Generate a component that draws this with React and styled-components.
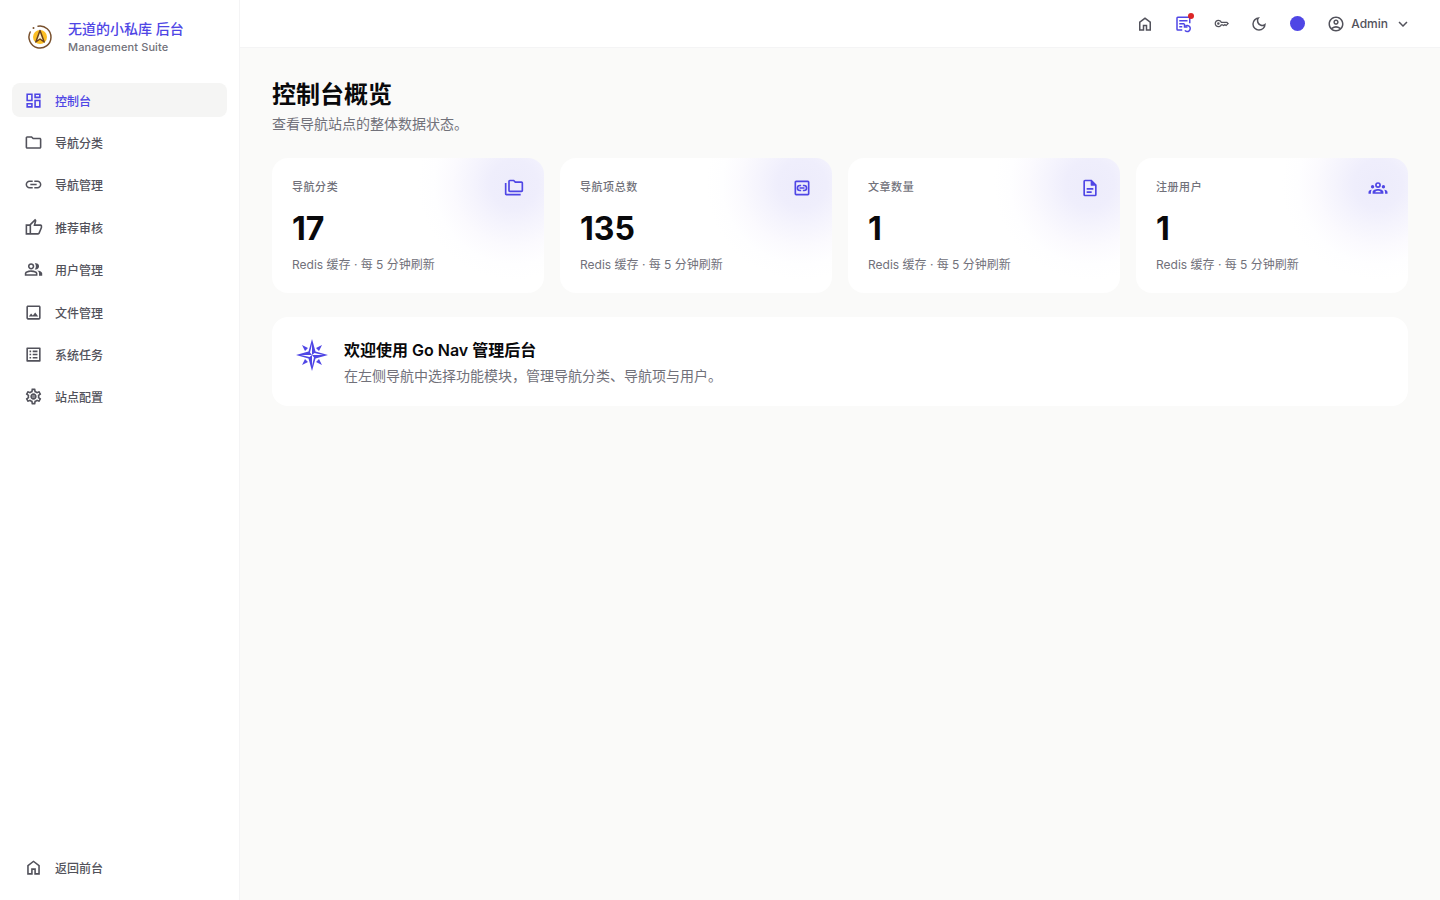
import styled, { createGlobalStyle } from 'styled-components'
import {
    MdOutlineDashboard, MdOutlineFolder, MdLink, MdOutlineImage, MdOutlineListAlt,
    MdOutlineSettings, MdOutlineFolderCopy, MdOutlineDarkMode, MdOutlineAccountCircle, MdExpandMore
} from 'react-icons/md'

const GlobalStyle = createGlobalStyle`
    * { box-sizing: border-box; }
    body {
        margin: 0;
        background: #fafaf9;
        color: #09090b;
        font-family: Inter, "Noto Sans CJK SC", sans-serif;
        -webkit-font-smoothing: antialiased;
    }
    svg { display: block; flex-shrink: 0; }
    button { font-family: inherit; }
    h1, h2, p { margin: 0; }
`

const Layout = styled.div`
    display: flex;
    min-height: 100vh;
`

const Sidebar = styled.aside`
    display: flex;
    flex-direction: column;
    width: 240px;
    flex-shrink: 0;
    padding: 16px 12px;
    background: #fff;
    border-right: 1px solid #f4f4f5;
`

const Brand = styled.div`
    display: flex;
    align-items: center;
    gap: 12px;
    padding: 0 12px;
    margin-bottom: 25px;
    height: 42px;
`

const BrandName = styled.div`
    font-size: 14px;
    line-height: 20px;
    font-weight: 500;
    color: #4f46e5;
`

const BrandSub = styled.div`
    font-size: 11px;
    line-height: 16px;
    font-weight: 500;
    letter-spacing: 0.01em;
    color: #71717a;
`

const Nav = styled.nav`
    display: flex;
    flex-direction: column;
    justify-content: space-between;
    height: 331px;
    margin-bottom: auto;
`

const NavLink = styled.a`
    display: flex;
    align-items: center;
    gap: 12px;
    height: 34px;
    padding: 0 12px;
    border-radius: 8px;
    font-size: 12px;
    font-weight: 500;
    text-decoration: none;
    color: ${({active})=>(active ? '#4f46e5' : '#52525b')};
    background: ${({active})=>(active ? '#f5f5f4' : 'transparent')};
    svg { font-size: 19px; }
`

const Main = styled.div`
    flex: 1;
    min-width: 0;
`

const Topbar = styled.header`
    display: flex;
    align-items: center;
    justify-content: flex-end;
    gap: 6px;
    height: 48px;
    padding: 0 24px;
    background: #fff;
    border-bottom: 1px solid #f4f4f5;
`

const IconButton = styled.button`
    position: relative;
    display: flex;
    align-items: center;
    justify-content: center;
    width: 32px;
    height: 32px;
    padding: 0;
    border: 0;
    border-radius: 8px;
    background: none;
    font-size: 18px;
    color: ${({accent})=>(accent ? '#4f46e5' : '#52525b')};
`

const RedDot = styled.span`
    position: absolute;
    top: 5px;
    right: 5px;
    width: 6px;
    height: 6px;
    border-radius: 50%;
    background: #dc2626;
`

const ColorDot = styled.span`
    width: 15px;
    height: 15px;
    border-radius: 50%;
    background: #4f46e5;
`

const UserButton = styled.button`
    display: flex;
    align-items: center;
    gap: 6px;
    height: 32px;
    padding: 0 4px 0 8px;
    border: 0;
    background: none;
    font-size: 12px;
    font-weight: 500;
    color: #52525b;
`

const Content = styled.main`
    padding: 32px;
`

const Title = styled.h1`
    font-size: 24px;
    line-height: 30px;
    font-weight: 600;
`

const Subtitle = styled.p`
    margin: 2px 0 22px;
    font-size: 14px;
    line-height: 24px;
    color: #71717a;
`

const Cards = styled.section`
    display: grid;
    grid-template-columns: repeat(4, 1fr);
    gap: 16px;
    margin-bottom: 24px;
`

const Card = styled.article`
    padding: 20px;
    border-radius: 16px;
    background: radial-gradient(circle at calc(100% - 30px) 26px, #edecfb 0, #efeefc 24px, #f5f4fd 42px, #fbfafe 62px, #fefeff 80px, #fff 96px);
`

const CardHead = styled.div`
    display: flex;
    align-items: center;
    justify-content: space-between;
    height: 19px;
    font-size: 11px;
    line-height: 17px;
    font-weight: 500;
    letter-spacing: 0.05em;
    color: #71717a;
    svg { font-size: 20px; color: #4f46e5; }
`

const Number = styled.div`
    margin: 12px 0 8px;
    font-size: 32px;
    line-height: 40px;
    font-weight: 700;
`

const Hint = styled.p`
    font-size: 12px;
    line-height: 16px;
    color: #71717a;
`

const Welcome = styled.section`
    display: flex;
    gap: 16px;
    padding: 20px 24px;
    border-radius: 16px;
    background: #fff;
    color: #4f46e5;
    > svg { margin-top: 2px; }
`

const WelcomeTitle = styled.h2`
    margin-bottom: 2px;
    font-size: 16px;
    line-height: 26px;
    font-weight: 600;
    color: #09090b;
`

const WelcomeText = styled.p`
    font-size: 14px;
    line-height: 21px;
    color: #71717a;
`

const Icon = ({size = '1em', children}) => (
    <svg width={size} height={size} viewBox="0 0 24 24" fill="currentColor" aria-hidden="true">{children}</svg>
)

const HomeIcon = () => (
    <Icon><path d="M6 19h3v-6h6v6h3v-9l-6-4.5L6 10v9Zm-2 2V9l8-6 8 6v12h-7v-6h-2v6H4Z" /></Icon>
)

const ThumbIcon = () => (
    <Icon><path d="M18 21H7V8l7-7l1.25 1.25q.175.175.288.475t.112.575v.35L14.55 8H21q.8 0 1.4.6T23 10v2q0 .175-.05.375t-.1.375l-3 7.05q-.225.5-.75.85T18 21m-9-2h9l3-7v-2h-9l1.35-5.5L9 8.85zM7 8v2H4v9h3v2H2V8z" /></Icon>
)

const GroupIcon = () => (
    <Icon><path d="M1 20v-2.800q0-.85.438-1.562T2.600 14.550q1.550-.775 3.150-1.162T9 13t3.250.388t3.150 1.162q.725.375 1.163 1.088T17 17.200V20zm18 0v-3q0-1.100-.612-2.113T16.650 13.150q1.275.15 2.400.513t2.100.887q.9.5 1.375 1.112T23 17v3zM9 12q-1.650 0-2.825-1.175T5 8t1.175-2.825T9 4t2.825 1.175T13 8t-1.175 2.825T9 12m10-4q0 1.650-1.175 2.825T15 12q-.275 0-.7-.062t-.7-.138q.675-.8 1.038-1.775T15 8t-.362-2.025T13.600 4.200q.35-.125.7-.163T15 4q1.650 0 2.825 1.175T19 8M3 18h12v-.8q0-.275-.137-.5t-.363-.35q-1.350-.675-2.725-1.012T9 15t-2.775.338T3.500 16.350q-.225.125-.363.35T3 17.200zm6-8q.825 0 1.413-.587T11 8t-.587-1.412T9 6t-1.412.588T7 8t.588 1.413T9 10" /></Icon>
)

const SettingsIcon = () => (
    <Icon>
        <MdOutlineSettings size={24} />
        <circle cx="12" cy="12" r="2" fillOpacity="0.7" />
    </Icon>
)

const TaskIcon = () => (
    <svg width="18" height="18" viewBox="0 0 24 24" fill="none" stroke="currentColor" strokeWidth="2" aria-hidden="true">
        <path d="M11 20H5a1 1 0 0 1-1-1V4a1 1 0 0 1 1-1h15a1 1 0 0 1 1 1v7" />
        <path d="M7 7.500h11M7 11.500h7M7 15.500h4" />
        <path d="M14.500 20.500a4 4 0 1 0 .5-5.500" />
        <path d="M14 12v4h4" />
    </svg>
)

const KeyIcon = () => (
    <Icon size={15}><path d="M7 14q-.825 0-1.412-.587T5 12t.588-1.412T7 10t1.413.588T9 12t-.587 1.413T7 14m0 4q-2.500 0-4.250-1.750T1 12t1.750-4.250T7 6q1.675 0 3.038.825T12.200 9H21l3 3l-4.500 4.500l-2-1.500l-2 1.500l-2.125-1.500H12.200q-.8 1.350-2.162 2.175T7 18m0-2q1.400 0 2.463-.85T10.875 13H14l1.450 1.025L17.500 12.500l1.775 1.375L21.150 12l-1-1h-9.275q-.35-1.300-1.412-2.150T7 8q-1.650 0-2.825 1.175T3 12t1.175 2.825T7 16" /></Icon>
)

const LinkBoxIcon = () => (
    <Icon>
        <path d="M5 21a2 2 0 0 1-2-2V5c0-1.100.9-2 2-2h14a2 2 0 0 1 2 2v14a2 2 0 0 1-2 2H5Zm0-2h14V5H5v14Z" />
        <path d="M11 16H9.500a4 4 0 0 1 0-8H11v2H9.500a2 2 0 0 0 0 4H11v2Zm2 0v-2h1.500a2 2 0 0 0 0-4H13V8h1.500a4 4 0 0 1 0 8H13Zm-4-3v-2h6v2H9Z" />
    </Icon>
)

const ArticleIcon = () => (
    <Icon>
        <path d="M8 18v-2h6v2H8Zm0-4v-2h8v2H8Zm-2 8a2 2 0 0 1-2-2V4c0-1.100.9-2 2-2h8l6 6v12a2 2 0 0 1-2 2H6Zm7-13V4H6v16h12V9h-5Z" />
        <path d="M13 3l6 6h-6z" />
    </Icon>
)

const CrowdIcon = () => (
    <Icon>
        <path fillRule="evenodd" d="M12 5a3.500 3.500 0 1 1 0 7 3.500 3.500 0 0 1 0-7Zm0 2a1.500 1.500 0 1 0 0 3 1.500 1.500 0 0 0 0-3Z" />
        <circle cx="5.500" cy="10.500" r="2" />
        <circle cx="18.500" cy="10.500" r="2" />
        <path fillRule="evenodd" d="M5.500 19v-2c0-2.500 3.500-3.700 6.500-3.700s6.500 1.200 6.500 3.700v2h-13Zm3-2h7c-.8-1.100-2-1.600-3.500-1.600s-2.700.5-3.500 1.600Z" />
        <path d="M.6 19v-1.800c0-1.700 1.500-2.800 3.900-3-.7.9-1 1.800-1 2.800v2H.6Zm22.800 0v-1.800c0-1.700-1.500-2.800-3.900-3 .7.9 1 1.800 1 2.800v2h2.900Z" />
    </Icon>
)

const Logo = () => (
    <svg width="32" height="32" viewBox="0 0 32 32" fill="none" aria-hidden="true">
        <circle cx="16" cy="16" r="7" fill="#fcbf24" />
        <path d="M14 5.200A11 11 0 1 1 6.200 11" stroke="#78502d" strokeWidth="1.500" strokeLinecap="round" />
        <circle cx="9.500" cy="7" r="1" fill="#78502d" />
        <path d="M16 9.500 11.800 21l4.200-3 4.200 3Z" fill="#fff3cf" stroke="#6b431f" strokeWidth="1.500" strokeLinejoin="round" />
    </svg>
)

const CompassRose = () => (
    <svg width="32" height="32" viewBox="0 0 32 32" fill="currentColor" aria-hidden="true">
        <path d="m6 6 6 3-3 3Zm20 0-3 6-3-3ZM6 26l3-6 3 3Zm20 0-6-3 3-3Z" />
        <path fillRule="evenodd" d="m16 0 3.500 12.500L32 16l-12.500 3.500L16 32l-3.500-12.500L0 16l12.500-3.500ZM16 5v11l-2-2.500Zm11 11H16l2.500-2ZM16 27V16l2 2.500ZM5 16h11l-2.500 2Z" />
    </svg>
)

const links = [
    {text: '控制台', icon: MdOutlineDashboard, active: true},
    {text: '导航分类', icon: MdOutlineFolder},
    {text: '导航管理', icon: MdLink},
    {text: '推荐审核', icon: ThumbIcon},
    {text: '用户管理', icon: GroupIcon},
    {text: '文件管理', icon: MdOutlineImage},
    {text: '系统任务', icon: MdOutlineListAlt},
    {text: '站点配置', icon: SettingsIcon}
]

const stats = [
    {label: '导航分类', value: 17, icon: MdOutlineFolderCopy},
    {label: '导航项总数', value: 135, icon: LinkBoxIcon},
    {label: '文章数量', value: 1, icon: ArticleIcon},
    {label: '注册用户', value: 1, icon: CrowdIcon}
]

const App = () => {
    return(
        <Layout>
            <GlobalStyle />
            <Sidebar>
                <Brand>
                    <Logo />
                    <div>
                        <BrandName>无道的小私库 后台</BrandName>
                        <BrandSub>Management Suite</BrandSub>
                    </div>
                </Brand>
                <Nav>
                    {
                        links.map(({text, icon: LinkIcon, active}) => (
                            <NavLink key={text} href="#" active={active ? 1 : undefined}>
                                <LinkIcon />{text}
                            </NavLink>
                        ))
                    }
                </Nav>
                <NavLink href="#"><HomeIcon />返回前台</NavLink>
            </Sidebar>
            <Main>
                <Topbar>
                    <IconButton aria-label="首页"><HomeIcon /></IconButton>
                    <IconButton aria-label="任务" accent="true"><TaskIcon /><RedDot /></IconButton>
                    <IconButton aria-label="密码"><KeyIcon /></IconButton>
                    <IconButton aria-label="深色模式"><MdOutlineDarkMode /></IconButton>
                    <IconButton aria-label="主题色"><ColorDot /></IconButton>
                    <UserButton>
                        <MdOutlineAccountCircle size={18} />
                        Admin
                        <MdExpandMore size={18} />
                    </UserButton>
                </Topbar>
                <Content>
                    <Title>控制台概览</Title>
                    <Subtitle>查看导航站点的整体数据状态。</Subtitle>
                    <Cards>
                        {
                            stats.map(({label, value, icon: StatIcon}) => (
                                <Card key={label}>
                                    <CardHead>{label}<StatIcon /></CardHead>
                                    <Number>{value}</Number>
                                    <Hint>Redis 缓存 · 每 5 分钟刷新</Hint>
                                </Card>
                            ))
                        }
                    </Cards>
                    <Welcome>
                        <CompassRose />
                        <div>
                            <WelcomeTitle>欢迎使用 Go Nav 管理后台</WelcomeTitle>
                            <WelcomeText>在左侧导航中选择功能模块，管理导航分类、导航项与用户。</WelcomeText>
                        </div>
                    </Welcome>
                </Content>
            </Main>
        </Layout>
    )
}

export default App
